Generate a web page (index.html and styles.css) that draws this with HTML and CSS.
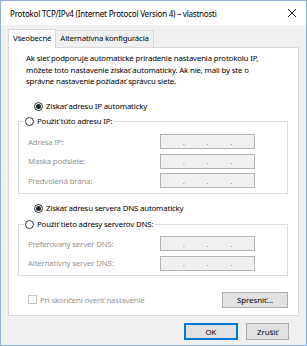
FILE: index.html
```html
<!DOCTYPE html>
<html lang="sk">
<head>
    <meta charset="UTF-8">
    <meta name="viewport" content="width=device-width, initial-scale=1.0">
    <title>Protokol TCP/IPv4 – vlastnosti</title>
    <link rel="stylesheet" href="styles.css">
</head>
<body>
    <div class="window">
        <div class="titlebar">
            <span class="title">Protokol TCP/IPv4 (Internet Protocol Version 4) – vlastnosti</span>
            <svg class="close" width="10" height="10" viewBox="0 0 10 10">
                <path d="M1 1 L9 9 M9 1 L1 9" stroke="#222" stroke-width="1" fill="none"/>
            </svg>
        </div>

        <div class="tabs">
            <div class="tab active">Všeobecné</div>
            <div class="tab">Alternatívna konfigurácia</div>
        </div>

        <div class="panel">
            <p class="intro">Ak sieť podporuje automatické priradenie nastavenia protokolu IP,<br>
                môžete toto nastavenie získať automaticky. Ak nie, mali by ste o<br>
                správne nastavenie požiadať správcu siete.</p>

            <div class="option first"><span class="radio checked"></span>Získať adresu IP automaticky</div>

            <fieldset class="group">
                <legend class="option"><span class="radio"></span>Použiť túto adresu IP:</legend>
                <div class="field-row">
                    <span class="label">Adresa IP:</span>
                    <span class="ip"><i>.</i><i>.</i><i>.</i></span>
                </div>
                <div class="field-row">
                    <span class="label">Maska podsiete:</span>
                    <span class="ip"><i>.</i><i>.</i><i>.</i></span>
                </div>
                <div class="field-row">
                    <span class="label">Predvolená brána:</span>
                    <span class="ip"><i>.</i><i>.</i><i>.</i></span>
                </div>
            </fieldset>

            <div class="option dns"><span class="radio checked"></span>Získať adresu servera DNS automaticky</div>

            <fieldset class="group dns-group">
                <legend class="option"><span class="radio"></span>Použiť tieto adresy serverov DNS:</legend>
                <div class="field-row">
                    <span class="label">Preferovaný server DNS:</span>
                    <span class="ip"><i>.</i><i>.</i><i>.</i></span>
                </div>
                <div class="field-row">
                    <span class="label">Alternatívny server DNS:</span>
                    <span class="ip"><i>.</i><i>.</i><i>.</i></span>
                </div>
            </fieldset>

            <div class="bottom-row">
                <div class="check-label"><span class="checkbox"></span>Pri skončení overiť nastavenie</div>
                <button class="btn advanced">Spresniť...</button>
            </div>
        </div>

        <div class="footer">
            <button class="btn ok">OK</button>
            <button class="btn cancel">Zrušiť</button>
        </div>
    </div>
</body>
</html>
```

FILE: styles.css
```css
* {
    box-sizing: border-box;
}

body {
    margin: 0;
    font-family: "Noto Sans", "Open Sans", sans-serif;
    font-size: 7.8px;
    letter-spacing: -0.15px;
    color: #000;
    background: #fff;
}

.window {
    width: 307px;
    height: 346px;
    border: 1px solid #8fb0d8;
    background: #f0f0f0;
    display: flex;
    flex-direction: column;
}

.titlebar {
    height: 24px;
    background: #fff;
    display: flex;
    align-items: center;
    justify-content: space-between;
    padding: 0 9px 0 9px;
}

.title {
    font-size: 8.1px;
    letter-spacing: -0.25px;
}

.close {
    display: block;
}

.tabs {
    display: flex;
    align-items: flex-end;
    margin: 4px 0 0 7px;
    position: relative;
    z-index: 1;
}

.tab {
    height: 17px;
    line-height: 15px;
    padding: 0 4px;
    border: 1px solid #d9d9d9;
    border-bottom: none;
    background: #f0f0f0;
    margin-right: -1px;
}

.tab.active {
    height: 19px;
    line-height: 17px;
    background: #fff;
    margin-bottom: -1px;
}

.panel {
    margin: 0 7px 0 7px;
    height: 269px;
    background: #fff;
    border: 1px solid #d9d9d9;
    padding: 0 10px 0 9px;
}

.intro {
    margin: 0;
    padding: 5px 0 0 8px;
    line-height: 11.7px;
}

.option {
    display: flex;
    align-items: center;
    height: 12px;
}

.option.first {
    margin: 12px 0 0 16px;
}

.radio {
    width: 9px;
    height: 9px;
    border: 1px solid #333;
    border-radius: 50%;
    margin-right: 3px;
    display: flex;
    align-items: center;
    justify-content: center;
    flex-shrink: 0;
}

.radio.checked::after {
    content: "";
    width: 5px;
    height: 5px;
    border-radius: 50%;
    background: #222;
}

.group {
    margin: 3px 0 0 0;
    border: 1px solid #dcdcdc;
    padding: 7px 32px 5px 9px;
}

.group legend {
    padding: 0 2px 0 1px;
    margin-left: -4px;
}

.field-row {
    display: grid;
    grid-template-columns: 132px 95px;
    align-items: center;
    height: 15px;
    margin-bottom: 4.5px;
}

.field-row:last-child {
    margin-bottom: 0;
}

.label {
    color: #949494;
}

.ip {
    height: 15px;
    border: 1px solid #b4b4b4;
    background: #f0f0f0;
    display: flex;
    justify-content: space-evenly;
    align-items: center;
    color: #888;
}

.ip i {
    font-style: normal;
    line-height: 1;
    padding-top: 2px;
}

.option.dns {
    margin: 8px 0 0 16px;
}

.dns-group {
    margin-top: 4px;
    padding-top: 6px;
    padding-bottom: 4px;
}

.bottom-row {
    display: flex;
    justify-content: space-between;
    align-items: center;
    margin: 16px 0 0 10px;
}

.check-label {
    display: flex;
    align-items: center;
    color: #949494;
}

.checkbox {
    width: 9px;
    height: 9px;
    border: 1px solid #c4c4c4;
    margin-right: 3px;
}

.btn {
    font-family: inherit;
    font-size: 7.8px;
    color: #000;
    background: #e1e1e1;
    border: 1px solid #adadad;
    height: 16px;
    padding: 0;
}

.advanced {
    width: 66px;
}

.footer {
    display: flex;
    justify-content: flex-end;
    gap: 8px;
    padding: 7px 17px 0 0;
}

.ok {
    width: 54px;
    height: 17px;
    border: 1px solid #0078d7;
    box-shadow: inset 0 0 0 1px #0078d7;
}

.cancel {
    width: 43px;
    height: 17px;
}
```
